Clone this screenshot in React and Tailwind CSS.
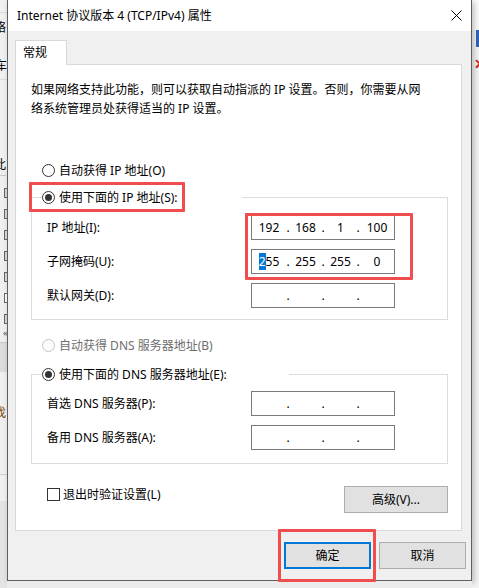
import React from "react";

function Radio({ checked, disabled }) {
  return (
    <span
      className={
        disabled
          ? "w-[13px] h-[13px] rounded-full border border-[#c4c4c4] bg-[#fbfbfb] flex items-center justify-center shrink-0"
          : "w-[13px] h-[13px] rounded-full border border-[#333333] bg-white flex items-center justify-center shrink-0"
      }
    >
      {checked && <span className="w-[7px] h-[7px] rounded-full bg-[#333333]" />}
    </span>
  );
}

function IpBox({ parts, selectFirst }) {
  const cell = (txt, i) => {
    if (i === 1 && selectFirst && txt) {
      return (
        <span>
          <span className="bg-[#0078d7] text-white">{txt[0]}</span>
          {txt.slice(1)}
        </span>
      );
    }
    return txt;
  };
  return (
    <div className="w-[144px] h-[25px] border border-[#7a7a7a] bg-white flex items-center text-[12px] leading-[15px] text-black">
      <span className="w-[34px] text-center">{cell(parts[0], 1)}</span>
      <span className="w-[4px] flex justify-center">.</span>
      <span className="w-[31px] text-center">{parts[1]}</span>
      <span className="w-[4px] flex justify-center">.</span>
      <span className="w-[31px] text-center">{parts[2]}</span>
      <span className="w-[4px] flex justify-center">.</span>
      <span className="flex-1 text-center">{parts[3]}</span>
    </div>
  );
}

function Row({ label, parts, selectFirst }) {
  return (
    <div className="flex items-center h-[25px]">
      <span className="w-[204px] text-[12px] leading-[19px] text-black">{label}</span>
      <IpBox parts={parts} selectFirst={selectFirst} />
    </div>
  );
}

export default function App() {
  return (
    <div className="relative w-[479px] h-[588px] overflow-hidden bg-[#f0f0f0] flex font-['Noto_Sans','Noto_Sans_CJK_SC',sans-serif] text-[12px] text-black">
      {/* left background window */}
      <div className="w-[7px] h-full bg-[#f0f0f0] overflow-hidden flex flex-col shrink-0">
        <div className="h-[13px] border-b border-[#dcdcdc]" />
        <div className="mt-[8px] -ml-[6px] leading-[14px] whitespace-nowrap">络</div>
        <div className="mt-[24px] -ml-[5px] leading-[14px] whitespace-nowrap">车</div>
        <div className="mt-[6px] h-px bg-[#dcdcdc]" />
        <div className="mt-[78px] -ml-[6px] leading-[14px] whitespace-nowrap">此</div>
        <div className="mt-[3px] h-px w-[6px] bg-[#c8c8c8]" />
        <div className="flex flex-col gap-[11px] mt-[12px] pl-[4px]">
          <div className="w-[6px] h-[10px] border border-[#666] bg-[#d8d8d8]" />
          <div className="w-[6px] h-[10px] border border-[#666] bg-[#d8d8d8]" />
          <div className="w-[6px] h-[10px] border border-[#666] bg-[#d8d8d8]" />
          <div className="w-[6px] h-[10px] border border-[#666] bg-[#d8d8d8]" />
          <div className="w-[6px] h-[10px] border border-[#666] bg-[#d8d8d8]" />
          <div className="w-[6px] h-[10px] border border-[#666] bg-white" />
          <div className="w-[6px] h-[10px] border border-[#666] bg-[#d8d8d8]" />
        </div>
        <div className="mt-[4px] pl-[3px] text-[9px] leading-[10px] text-[#555]">«</div>
        <div className="mt-[4px] h-[30px] bg-[#dcdcdc] border-t border-[#c8c8c8]" />
        <div className="mt-[34px] -ml-[6px] leading-[14px] text-[#7a4a10] whitespace-nowrap">找</div>
        <div className="mt-[54px] h-px bg-[#d0d0d0]" />
        <div className="mt-[26px] flex-1 bg-[#e4e4e4]" />
      </div>

      {/* dialog column */}
      <div className="w-[465px] flex flex-col shrink-0 relative z-10">
        <div className="w-[465px] h-[581px] flex flex-col border-l border-r border-b border-[#5f5f5f] shadow-[2px_2px_6px_rgba(0,0,0,0.25)]">
          {/* title bar */}
          <div className="h-[31px] bg-white flex items-center justify-between pl-[9px] pr-[9px]">
            <span className="text-[12px] leading-[16px]">Internet 协议版本 4 (TCP/IPv4) 属性</span>
            <svg width="11" height="11" viewBox="0 0 11 11">
              <path d="M0.5 0.5L10.5 10.5M10.5 0.5L0.5 10.5" stroke="#000" strokeWidth="1" fill="none" />
            </svg>
          </div>
          {/* body */}
          <div className="flex-1 bg-[#f0f0f0] flex flex-col pt-[9px] pl-[7px] pr-[5px]">
            <div className="w-[52px] h-[25px] -mb-px relative z-10 bg-white border border-b-0 border-[#d9d9d9] pl-[7px] flex items-center">
              <span className="leading-[16px]">常规</span>
            </div>
            <div className="w-[447px] bg-white border border-[#d9d9d9] flex flex-col pl-[15px] pr-[13px] pt-[15px] pb-[17px]">
              <p className="leading-[19px] h-[38px] whitespace-nowrap">
                如果网络支持此功能，则可以获取自动指派的 IP 设置。否则，你需要从网
                <br />
                络系统管理员处获得适当的 IP 设置。
              </p>
              <div className="mt-[42px] h-[20px] flex items-center gap-[4px] pl-[11px]">
                <Radio />
                <span className="leading-[19px]">自动获得 IP 地址(O)</span>
              </div>
              <fieldset className="mt-[7px] border border-[#dcdcdc] p-0 m-0 min-w-0">
                <legend className="ml-[10px] w-[200px] h-[20px] p-0">
                  <div className="h-[20px] flex items-center gap-[4px]">
                    <Radio checked />
                    <span className="leading-[19px]">使用下面的 IP 地址(S):</span>
                  </div>
                </legend>
                <div className="pt-[8px] pb-[11px] pl-[15px] flex flex-col gap-[9px]">
                  <Row label="IP 地址(I):" parts={["192", "168", "1", "100"]} />
                  <Row label="子网掩码(U):" parts={["255", "255", "255", "0"]} selectFirst />
                  <Row label="默认网关(D):" parts={["", "", "", ""]} />
                </div>
              </fieldset>
              <div className="mt-[15px] h-[20px] flex items-center gap-[4px] pl-[11px]">
                <Radio disabled />
                <span className="leading-[19px] text-[#6d6d6d]">自动获得 DNS 服务器地址(B)</span>
              </div>
              <fieldset className="mt-[9px] border border-[#dcdcdc] p-0 m-0 min-w-0">
                <legend className="ml-[10px] w-[247px] h-[20px] p-0">
                  <div className="h-[20px] flex items-center gap-[4px]">
                    <Radio checked />
                    <span className="leading-[19px]">使用下面的 DNS 服务器地址(E):</span>
                  </div>
                </legend>
                <div className="pt-[7px] pb-[13px] pl-[15px] flex flex-col gap-[9px]">
                  <Row label="首选 DNS 服务器(P):" parts={["", "", "", ""]} />
                  <Row label="备用 DNS 服务器(A):" parts={["", "", "", ""]} />
                </div>
              </fieldset>
              <div className="mt-[21px] flex justify-between items-start">
                <div className="h-[19px] flex items-center gap-[3px] pl-[16px]">
                  <span className="w-[13px] h-[13px] border border-[#333333] bg-white shrink-0" />
                  <span className="leading-[19px]">退出时验证设置(L)</span>
                </div>
                <div className="mt-[1px] w-[104px] h-[27px] bg-[#e1e1e1] border border-[#adadad] flex items-center justify-center">
                  <span className="leading-[16px]">高级(V)...</span>
                </div>
              </div>
            </div>
            <div className="mt-[11px] flex justify-end gap-[8px]">
              <div className="w-[87px] h-[27px] bg-[#e1e1e1] border-2 border-[#0078d7] flex items-center justify-center">
                <span className="leading-[16px]">确定</span>
              </div>
              <div className="w-[87px] h-[27px] bg-[#e1e1e1] border border-[#adadad] flex items-center justify-center">
                <span className="leading-[16px]">取消</span>
              </div>
            </div>
          </div>
        </div>
        <div className="flex-1 bg-[#ececec]" />
      </div>

      {/* right background window */}
      <div className="flex-1 h-full bg-[#f3f3f3] overflow-hidden flex flex-col">
        <div className="h-[30px] bg-[#fafafa]" />
        <div className="ml-[4px] w-[6px] h-[17px] bg-[#2f63b8]" />
        <div className="mt-[9px] ml-[2px] text-[14px] leading-[16px] font-bold text-[#d42020]">✕</div>
        <div className="flex-1" />
      </div>

      {/* red annotation boxes */}
      <div className="absolute left-[29px] top-[182px] w-[156px] h-[30px] border-[3px] border-[#f04e4e] rounded-[1px] z-20" />
      <div className="absolute left-[245px] top-[213px] w-[168px] h-[67px] border-[3px] border-[#f04e4e] rounded-[1px] z-20" />
      <div className="absolute left-[278px] top-[529px] w-[98px] h-[53px] border-[3px] border-[#f04e4e] rounded-[1px] z-20" />
    </div>
  );
}
